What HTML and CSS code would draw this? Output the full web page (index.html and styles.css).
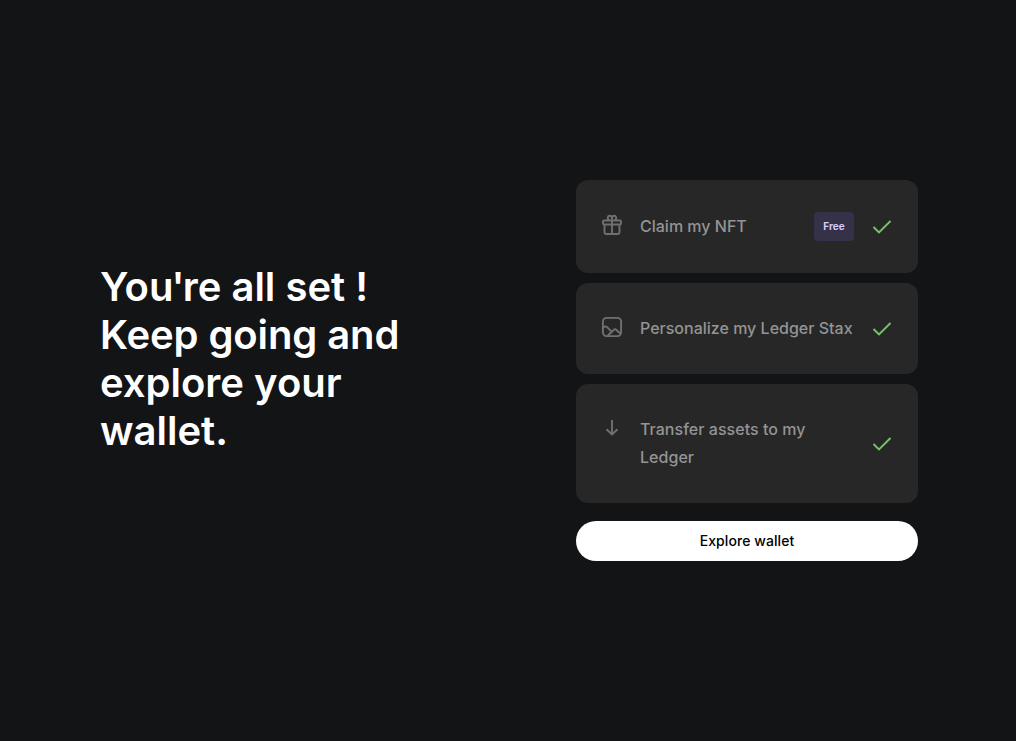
FILE: index.html
```html
<!DOCTYPE html>
<html lang="en">
<head>
<meta charset="utf-8">
<title>You're all set</title>
<link rel="stylesheet" href="styles.css">
</head>
<body>
<main class="page">
  <section class="intro">
    <h1 class="title">Yo<span class="tight">u'</span>re all set ! <span class="snug">Keep going and</span> explore your wallet.</h1>
  </section>
  <section class="steps">
    <div class="card">
      <svg class="icon" viewBox="0 0 24 24"><path d="M4.500 12v7a2 2 0 0 0 2 2h11a2 2 0 0 0 2-2v-7M4 7.500h16a1 1 0 0 1 1 1v2a1 1 0 0 1-1 1H4a1 1 0 0 1-1-1v-2a1 1 0 0 1 1-1zM12 7.500v13.500M12 7.500V5.500c0-1.700-.8-2.700-2.200-2.700A2 2 0 0 0 7.800 4.800c0 1.500.8 2.500 2 2.700M12 7.500V5.500c0-1.700.8-2.700 2.200-2.700a2 2 0 0 1 2 2c0 1.500-.8 2.500-2 2.700"/></svg>
      <span class="label">Claim my NFT</span>
      <span class="badge">Free</span>
      <svg class="check" viewBox="0 0 20 20"><path d="M1.500 10l5.500 5.500L18.500 4"/></svg>
    </div>
    <div class="card">
      <svg class="icon icon-raised" viewBox="0 0 24 24"><rect x="2.900" y="2.900" width="18.200" height="18.200" rx="3.800"/><path d="M3 12.700l1.800-1c.8-.4 1.600-.3 2.300.4l4.400 4.600M7.800 20.500l6.100-5.800c.7-.7 1.600-.7 2.300 0l4.600 4.300"/></svg>
      <span class="label">Personalize my Ledger Stax</span>
      <svg class="check" viewBox="0 0 20 20"><path d="M1.500 10l5.500 5.500L18.500 4"/></svg>
    </div>
    <div class="card">
      <svg class="icon icon-raised" viewBox="0 0 24 24"><path d="M12 4v15M6.500 13.200l5.500 5.300 5.500-5.300"/></svg>
      <span class="label label-wide">Transfer assets to my Ledger</span>
      <svg class="check" viewBox="0 0 20 20"><path d="M1.500 10l5.500 5.500L18.500 4"/></svg>
    </div>
    <button class="explore" type="button">Explore wallet</button>
  </section>
</main>
</body>
</html>
```
FILE: styles.css
```css
* { box-sizing: border-box; }
body {
  margin: 0;
  background: #131416;
  color: #fff;
  font-family: Inter, sans-serif;
}
.page {
  display: flex;
  align-items: center;
  justify-content: space-between;
  height: 741px;
  padding: 0 98px 0 100px;
}
.intro {
  width: 320px;
  padding-bottom: 23px;
}
.title {
  margin: 0;
  font-size: 40px;
  font-weight: 600;
  line-height: 48px;
}
.tight { letter-spacing: -1.9px; }
.snug { letter-spacing: -0.1px; }
.steps {
  display: flex;
  flex-direction: column;
  gap: 10px;
  width: 342px;
}
.card {
  display: flex;
  align-items: center;
  padding: 32px 26px 32px 24px;
  border-radius: 12px;
  background: #272727;
}
.icon {
  flex: none;
  align-self: flex-start;
  width: 24px;
  height: 24px;
  margin: 1px 16px 0 0;
  fill: none;
  stroke: #717070;
  stroke-width: 1.9;
}
.icon-raised { margin-top: 0; }
.label {
  flex: 1;
  color: #949494;
  font-size: 16px;
  font-weight: 500;
  line-height: 27.2px;
}
.label-wide { letter-spacing: 0.04px; }
.badge {
  display: flex;
  align-items: center;
  justify-content: center;
  width: 40px;
  height: 29px;
  padding-bottom: 1px;
  border-radius: 4px;
  background: #353148;
  color: #d4cbfb;
  font-size: 10px;
  font-weight: 700;
}
.check {
  flex: none;
  width: 20px;
  height: 20px;
  margin-left: 18px;
  fill: none;
  stroke: #78c46a;
  stroke-width: 1.9;
}
.explore {
  height: 40px;
  margin-top: 8px;
  border: 0;
  border-radius: 20px;
  background: #fff;
  color: #000;
  font: 500 14px/20px Inter, sans-serif;
  letter-spacing: 0.08px;
}
```
